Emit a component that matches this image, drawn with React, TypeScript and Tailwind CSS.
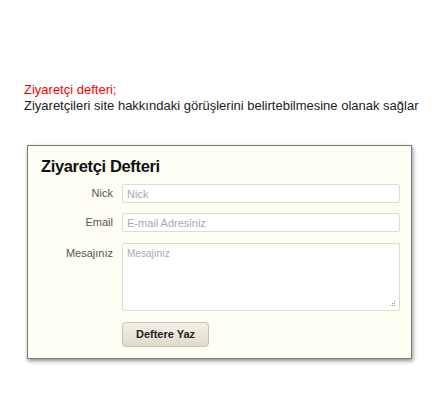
export default function App() {
  return (
    <div className="min-h-[418px] w-[437px] bg-white pt-[82px] font-['Liberation_Sans',Arial,sans-serif]">
      <div className="whitespace-nowrap pl-[24px] text-[13px] leading-[16px]">
        <p className="text-[#ff0000]">Ziyaretçi defteri;</p>
        <p className="text-[#222]">Ziyaretçileri site hakkındaki görüşlerini belirtebilmesine olanak sağlar</p>
      </div>

      <div className="ml-[27px] mt-[31px] h-[214px] w-[385px] border border-[#7a7a7a] bg-[#fefef4] pl-[13px] pr-[10px] pt-[10px] shadow-[1px_2px_4px_rgba(0,0,0,0.45)]">
        <h1 className="text-[16.5px] font-bold leading-[21px] tracking-[-0.35px] text-[#111]">Ziyaretçi Defteri</h1>

        <form className="mt-[7px] flex flex-col text-[11px]" onSubmit={(e) => e.preventDefault()}>
          <div className="flex items-center">
            <label className="w-[72px] shrink-0 text-right text-[#555]">Nick</label>
            <input
              placeholder="Nick"
              className="ml-[9px] h-[19px] w-[278px] shrink-0 rounded-[2px] border border-[#deddcd] bg-white px-[4px] text-[11px] placeholder:text-[#aaa] outline-none"
            />
          </div>
          <div className="mt-[10px] flex items-center">
            <label className="w-[72px] shrink-0 text-right text-[#555]">Email</label>
            <input
              placeholder="E-mail Adresiniz"
              className="ml-[9px] h-[19px] w-[278px] shrink-0 rounded-[2px] border border-[#deddcd] bg-white px-[4px] text-[11px] placeholder:text-[#aaa] outline-none"
            />
          </div>
          <div className="mt-[11px] flex items-start">
            <label className="w-[72px] shrink-0 pt-[2px] text-right text-[#555]">Mesajınız</label>
            <div className="relative ml-[9px] shrink-0">
              <textarea
                placeholder="Mesajınız"
                className="block h-[68px] w-[278px] resize-none rounded-[2px] border border-[#deddcd] bg-white px-[4px] py-[2px] text-[10px] placeholder:text-[#aaa] outline-none"
              />
              {/* grip dots */}
              <svg className="absolute bottom-[4px] right-[4px]" width="7" height="7" viewBox="0 0 7 7">
                <rect x="5" y="1" width="1" height="1" fill="#999" />
                <rect x="3" y="3" width="1" height="1" fill="#999" />
                <rect x="5" y="3" width="1" height="1" fill="#999" />
                <rect x="1" y="5" width="1" height="1" fill="#999" />
                <rect x="3" y="5" width="1" height="1" fill="#999" />
                <rect x="5" y="5" width="1" height="1" fill="#999" />
              </svg>
            </div>
          </div>
          <div className="mt-[11px] pl-[81px]">
            <button
              type="submit"
              className="h-[25px] w-[87px] rounded-[4px] border border-[#c9c2b0] bg-gradient-to-b from-[#f4f1e8] to-[#e0dac9] text-[11px] font-bold text-[#222]"
            >
              Deftere Yaz
            </button>
          </div>
        </form>
      </div>
    </div>
  );
}
